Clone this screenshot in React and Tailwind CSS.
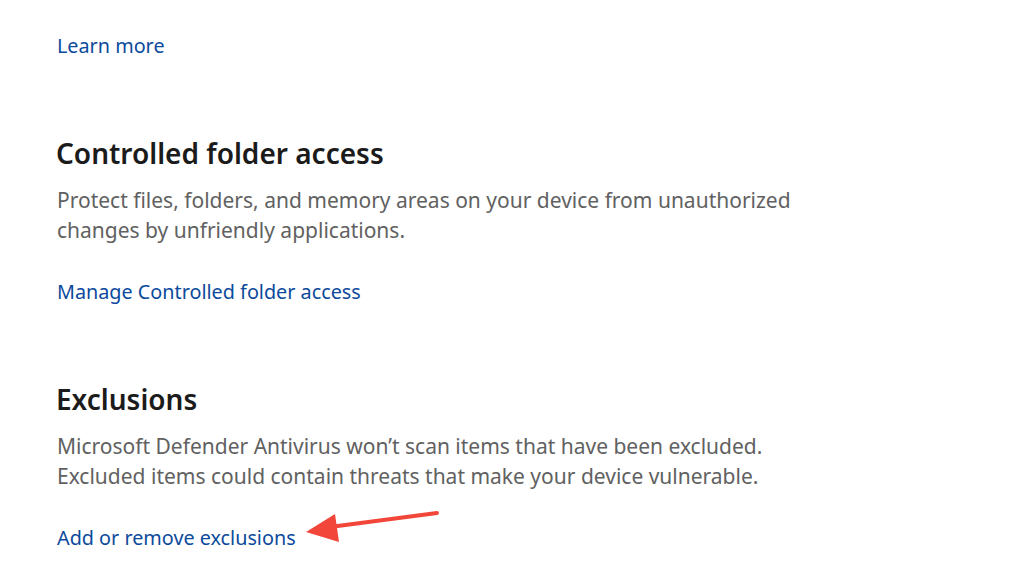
function LinkText({ children }) {
  return <a className="block text-[19.8px] leading-[30px] text-[#0b4a9c]">{children}</a>;
}

function Section({ title, lines, link }) {
  return (
    <section className="mt-[74px]">
      <h2 className="-ml-[1px] text-[28px] font-semibold leading-[36px] text-[#1b1b1b]">{title}</h2>
      <p className="mt-[14px] text-[21px] leading-[30px] text-[#616161]">
        {lines.map((line) => (
          <span key={line} className="block">
            {line}
          </span>
        ))}
      </p>
      <div className="mt-[32px]">
        <LinkText>{link}</LinkText>
      </div>
    </section>
  );
}

export default function App() {
  return (
    <div
      className="relative h-[579px] w-[1029px] overflow-hidden bg-white pl-[57px] pt-[31px]"
      style={{ fontFamily: '"Noto Sans", "Open Sans", sans-serif' }}
    >
      <LinkText>Learn more</LinkText>
      <Section
        title="Controlled folder access"
        lines={[
          "Protect files, folders, and memory areas on your device from unauthorized",
          "changes by unfriendly applications.",
        ]}
        link="Manage Controlled folder access"
      />
      <Section
        title="Exclusions"
        lines={[
          "Microsoft Defender Antivirus won’t scan items that have been excluded.",
          "Excluded items could contain threats that make your device vulnerable.",
        ]}
        link="Add or remove exclusions"
      />
      <svg className="absolute left-0 top-0" width="1029" height="579" viewBox="0 0 1029 579">
        <line x1="437" y1="513" x2="330" y2="527" stroke="#f2463a" strokeWidth="4" strokeLinecap="round" />
        <polygon points="306,532 335,514 339,542" fill="#f2463a" />
      </svg>
    </div>
  );
}
